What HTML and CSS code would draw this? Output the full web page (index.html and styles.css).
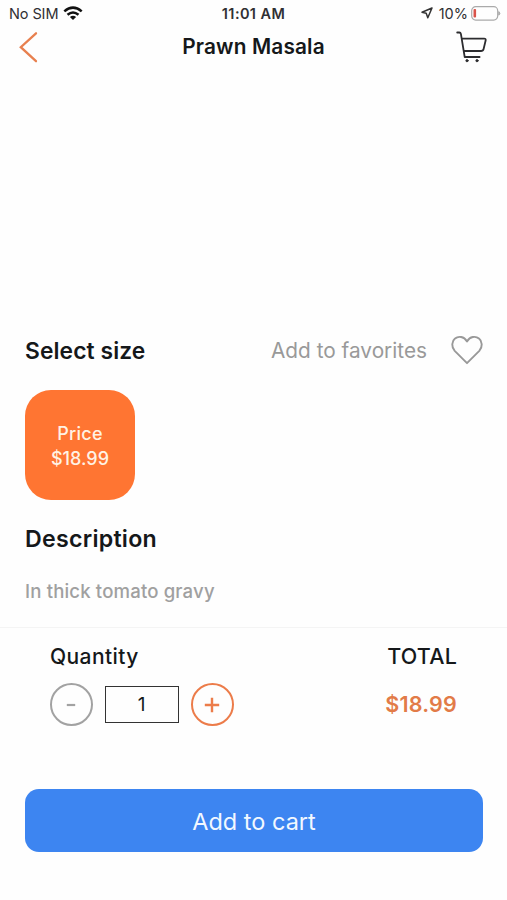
FILE: index.html
```html
<!DOCTYPE html>
<html lang="en">
<head>
<meta charset="utf-8">
<meta name="viewport" content="width=device-width, initial-scale=1">
<title>Prawn Masala</title>
<link rel="stylesheet" href="styles.css">
</head>
<body>
<div class="screen">
  <div class="status">
    <div class="status-left">
      <span class="carrier">No SIM</span>
      <svg class="wifi" width="20" height="15" viewBox="0 0 20 15" fill="none" stroke="#111" stroke-width="2.5">
        <path d="M1.3 5.4Q10-2.2 18.7 5.4M4.5 8.8Q10 4.2 15.5 8.8"/>
        <path d="M6.9 11Q10 8.6 13.1 11L10 14Z" fill="#111" stroke="none"/>
      </svg>
    </div>
    <span class="clock">11:01 AM</span>
    <div class="status-right">
      <svg width="12" height="12" viewBox="0 0 12 12" fill="none" stroke="#333" stroke-width="1.5" stroke-linejoin="round"><path d="M11 1L1 5.2L5.2 6.2L6.8 10.8Z"/></svg>
      <span class="percent">10%</span>
      <svg width="30" height="15" viewBox="0 0 30 15" fill="none"><rect x=".7" y=".7" width="26" height="13.4" rx="4" stroke="#aaa" stroke-width="1.2"/><rect x="2.5" y="3" width="2.6" height="8.6" rx="1" fill="#d9534a"/><path d="M27.8 5.6Q30 7.4 27.8 9.2Z" fill="#aaa" stroke="#aaa"/></svg>
    </div>
  </div>

  <header class="nav">
    <svg class="back" width="20" height="32" viewBox="0 0 20 32" fill="none" stroke="#e8804f" stroke-width="2.3" stroke-linecap="round"><path d="M17 2.3L1.8 16.2L17 30.2"/></svg>
    <h1 class="title">Prawn Masala</h1>
    <svg class="cart" width="32" height="32" viewBox="0 0 32 32" fill="none" stroke="#2c2c2f" stroke-width="1.8" stroke-linecap="round" stroke-linejoin="round"><path d="M1.2 1.5H3.3Q4.6 1.5 4.9 2.9L8.7 26H23.6M5.7 7.6H28.2Q30 7.6 29.7 9.3L27.6 18Q27.1 20 25 20H7.8"/><circle cx="11" cy="29.7" r="1.1" fill="#2c2c2f" stroke-width="1"/><circle cx="21" cy="29.7" r="1.1" fill="#2c2c2f" stroke-width="1"/></svg>
  </header>

  <main class="details">
    <div class="size-row">
      <h2 class="heading select">Select size</h2>
      <button class="favorite">
        <span class="fav-text">Add to favorites</span>
        <svg width="32" height="30" viewBox="0 0 32 30" fill="none" stroke="#999" stroke-width="1.9" stroke-linejoin="round"><path d="M16 28.2L3.7 15.8C.2 11.8.6 6.3 4 3.6C7.6.6 12.9 1.5 16 6.4C19.1 1.5 24.4.6 28 3.6C31.4 6.3 31.8 11.8 28.3 15.8Z"/></svg>
      </button>
    </div>
    <button class="size-card">
      <span class="price-label">Price</span>
      <span class="price-value">$18.99</span>
    </button>
    <h2 class="heading description">Description</h2>
    <p class="copy"><span>In thick tomato gravy</span></p>
  </main>

  <footer class="order">
    <div class="summary">
      <section>
        <h3 class="label"><span class="quantity">Quantity</span></h3>
        <div class="stepper">
          <button class="step minus" aria-label="Decrease"><svg width="20" height="20" viewBox="0 0 20 20"><path d="M5.8 10H14.2" stroke="currentColor" stroke-width="2.2"/></svg></button>
          <output class="count">1</output>
          <button class="step plus" aria-label="Increase"><svg width="20" height="20" viewBox="0 0 20 20"><path d="M2.8 10H17.2M10 2.8V17.2" stroke="currentColor" stroke-width="2.4"/></svg></button>
        </div>
      </section>
      <section class="total">
        <h3 class="label"><span class="total-label">TOTAL</span></h3>
        <div class="total-value">$18.99</div>
      </section>
    </div>
    <button class="submit"><span class="submit-text">Add to cart</span></button>
  </footer>
</div>
</body>
</html>
```

FILE: styles.css
```css
* { box-sizing: border-box; }
body { margin: 0; background: #fefefe; color: #15181a; font-family: Inter, "Liberation Sans", sans-serif; }
h1, h2, h3, p { margin: 0; }
button { border: 0; padding: 0; background: none; font: inherit; color: inherit; }
svg { display: block; flex: none; }
span { white-space: nowrap; }
.screen { height: 900px; display: flex; flex-direction: column; overflow: hidden; }

.status { height: 26px; padding: 0 6px 0 9px; display: grid; grid-template-columns: 1fr auto 1fr; align-items: center; line-height: 20px; color: #303033; }
.status-left, .status-right { display: flex; align-items: center; }
.status-right { justify-content: flex-end; }
.status-left { gap: 5px; }
.carrier, .clock, .percent { padding-top: 1px; line-height: 21px; }
.carrier { font-size: 14.5px; letter-spacing: -.1px; }
.clock { font-size: 14.5px; font-weight: 600; letter-spacing: .4px; margin-right: 3px; }
.percent { font-size: 14.5px; margin: 0 3px 0 6px; }

.nav { height: 42px; padding: 0 19px; display: grid; grid-template-columns: 1fr auto 1fr; align-items: center; }
.title { font-size: 20.8px; font-weight: 600; line-height: 28px; letter-spacing: .15px; }
.cart { justify-self: end; }

.details { flex: none; height: 560px; padding: 267px 24px 0 25px; border-bottom: 1px solid #f4f4f4; }
.size-row { display: flex; justify-content: space-between; align-items: center; height: 30px; }
.heading { font-size: 22.8px; font-weight: 600; line-height: 32px; letter-spacing: .1px; }
.select { padding-top: 2px; }
.favorite { display: flex; align-items: center; gap: 24px; color: #999; font-size: 20.8px; }
.size-card { width: 110px; height: 110px; margin-top: 25px; padding-top: 1px; border-radius: 26px; background: #ff7532; color: #fff2e4; display: flex; flex-direction: column; align-items: center; justify-content: center; font-size: 18px; font-weight: 500; line-height: 25px; }
.price-label { letter-spacing: .3px; }
.description { margin-top: 23px; font-size: 23.2px; letter-spacing: .25px; }
.copy { margin-top: 23px; font-size: 18.6px; font-weight: 500; line-height: 26px; letter-spacing: .15px; color: #a0a0a0; }

.order { flex: 1; padding: 15px 25px 0; }
.summary { height: 146px; padding: 0 25px; display: flex; justify-content: space-between; }
.label { font-size: 21px; font-weight: 500; line-height: 28px; height: 28px; }
.quantity { letter-spacing: .4px; }
.total-label { display: block; font-size: 21.5px; line-height: 26px; letter-spacing: .2px; }
.stepper { display: flex; align-items: center; gap: 12px; margin: 12px 0 0 -.5px; }
.step { width: 43px; height: 43px; border: 2.4px solid currentColor; border-radius: 50%; display: flex; align-items: center; justify-content: center; }
.minus { color: #a2a2a2; }
.plus { color: #ec7c4a; }
.count { width: 74px; height: 37px; border: 1px solid #333; display: grid; place-items: center; font-size: 19px; }
.total { text-align: right; }
.total-value { margin-top: 18px; font-size: 21.5px; font-weight: 600; line-height: 30px; letter-spacing: .2px; color: #e27b48; }
.submit { display: block; width: 458px; height: 63px; padding-top: 2px; border-radius: 14px; background: #3d85f1; color: #f2f8ff; font-size: 23.5px; }
```
